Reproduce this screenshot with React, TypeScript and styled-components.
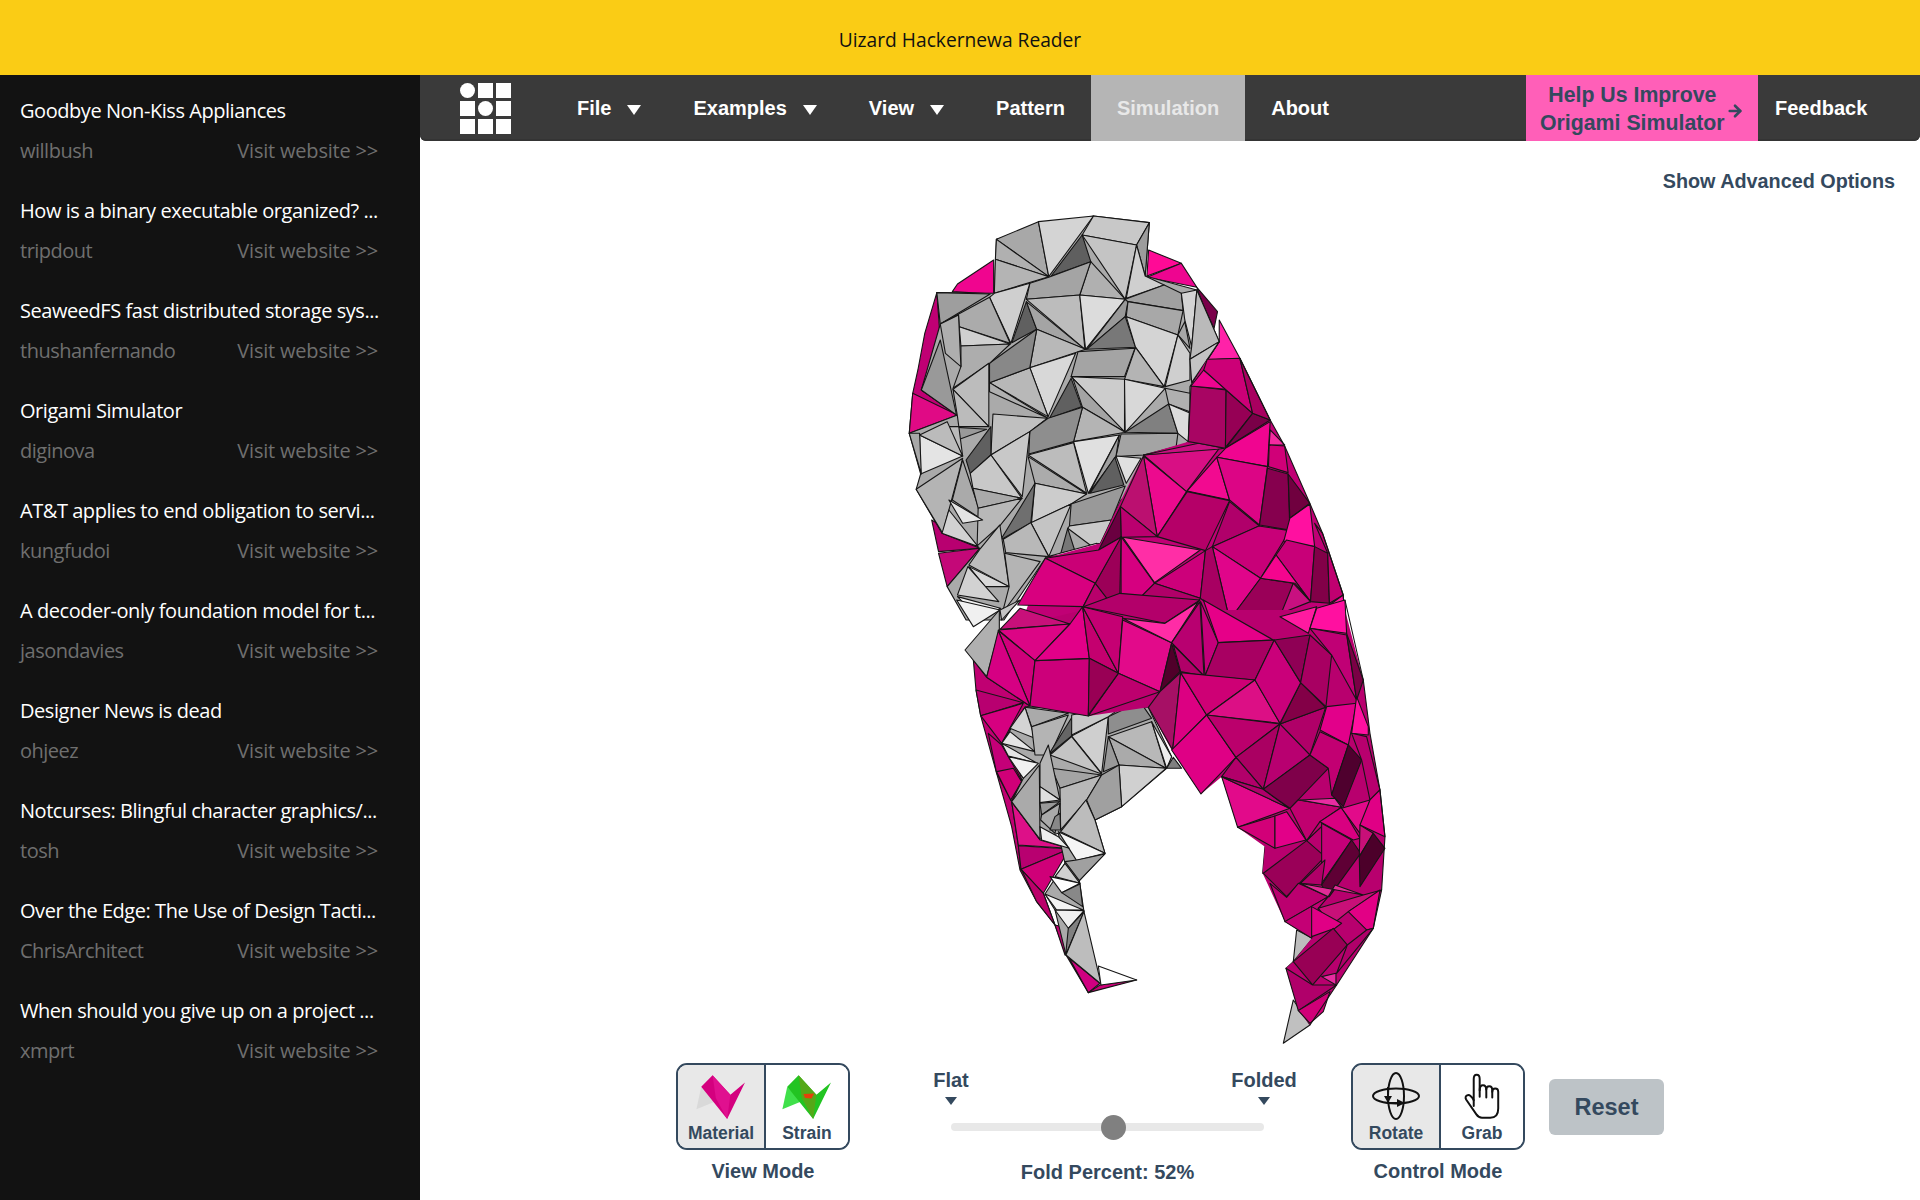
import { ArrowRight } from "lucide-react";
import styled, { createGlobalStyle } from "styled-components";

type Face = [string, string, boolean?];

const stories = [
  ["Goodbye Non-Kiss Appliances", "willbush"],
  ["How is a binary executable organized? ...", "tripdout"],
  ["SeaweedFS fast distributed storage sys...", "thushanfernando"],
  ["Origami Simulator", "diginova"],
  ["AT&T applies to end obligation to servi...", "kungfudoi"],
  ["A decoder-only foundation model for t...", "jasondavies"],
  ["Designer News is dead", "ohjeez"],
  ["Notcurses: Blingful character graphics/...", "tosh"],
  ["Over the Edge: The Use of Design Tacti...", "ChrisArchitect"],
  ["When should you give up on a project ...", "xmprt"],
];

// upper part of the model, traced from a crop at x 880 y 200
const upperFaces: Face[] = [
  ["#f0058f", "330,180 225,252 210,275 330,282"],
  ["#c00074", "165,278 130,400 110,510 95,580 85,700 225,645 120,570 175,420"],
  ["#e00a85", "95,580 85,700 225,645"],
  ["#ff0a96", "780,150 875,190 775,228"],
  ["#ee0590", "875,190 920,262 775,232"],
  ["#7a004a", "920,262 980,335 970,385 940,320"],
  ["#ff22a8", "985,360 1045,475 950,480 985,425"],
  ["#b80070", "150,960 290,1045 170,1055"],
  ["#c40878", "170,1060 290,1045 195,1160"],
  ["#aaaaaa", "338,118 620,48 782,68 770,228 920,270 985,425 900,560 895,725 700,900 640,1030 480,1075 360,1260 250,1260 195,1160 290,1045 180,1000 105,868 118,822 85,700 225,645 120,570 175,372 165,278 332,280"],
  ["#a8a8a8", "338,118 460,65 490,230"],
  ["#b0b0b0", "338,118 490,230 335,178"],
  ["#b4b4b4", "335,178 490,230 332,280"],
  ["#d4d4d4", "460,65 620,48 490,230"],
  ["#c8c8c8", "620,48 782,68 745,135 587,105"],
  ["#5f5f5f", "587,105 612,185 497,228"],
  ["#c4c4c4", "587,105 745,135 712,298"],
  ["#9c9c9c", "782,68 770,228 745,135"],
  ["#cfcfcf", "745,135 770,228 825,255 715,295"],
  ["#b0b0b0", "612,185 580,285 712,298"],
  ["#a4a4a4", "490,232 612,185 580,285 425,298 435,250"],
  ["#cfcfcf", "332,280 435,250 380,430 318,292"],
  ["#9e9e9e", "165,278 320,282 175,372"],
  ["#ababab", "175,372 318,292 378,430 230,380 228,345"],
  ["#d0d0d0", "230,380 378,432 235,438"],
  ["#bcbcbc", "425,298 580,285 595,448"],
  ["#dcdcdc", "580,285 712,298 597,448"],
  ["#606060", "425,305 455,388 383,428"],
  ["#a4a4a4", "425,305 595,448 455,388"],
  ["#b8b8b8", "455,388 597,448 575,455 435,503"],
  ["#999999", "712,298 720,305 712,350 600,448"],
  ["#787878", "712,350 742,442 600,448"],
  ["#a0a0a0", "712,298 825,255 875,280 880,332 720,305"],
  ["#a8a8a8", "720,305 880,332 865,405 715,350"],
  ["#d4d4d4", "715,350 865,405 825,560 742,442"],
  ["#cfcfcf", "865,405 900,460 900,540 828,560"],
  ["#a8a8a8", "885,365 865,405 900,445"],
  ["#d4d4d4", "875,280 920,270 905,440 885,360"],
  ["#bababa", "920,270 985,425 900,478 905,440"],
  ["#c4c4c4", "900,478 985,425 905,548"],
  ["#b4b4b4", "742,442 825,560 710,538"],
  ["#a4a4a4", "575,455 740,445 710,530 555,530"],
  ["#d8d8d8", "435,503 568,460 488,650"],
  ["#b8b8b8", "318,548 435,503 488,650"],
  ["#888888", "455,388 435,503 318,548 318,490"],
  ["#adadad", "235,438 378,432 318,490 212,565 235,500"],
  ["#cccccc", "555,530 710,538 710,697"],
  ["#d8d8d8", "710,538 828,565 712,697"],
  ["#606060", "555,535 585,620 492,655"],
  ["#a4a4a4", "560,535 712,697 588,622"],
  ["#b4b4b4", "588,622 712,697 562,725"],
  ["#b0b0b0", "318,548 488,655 318,575"],
  ["#c0c0c0", "328,642 485,655 435,695 322,765"],
  ["#8e8e8e", "488,655 588,622 562,725 432,762 435,695"],
  ["#b0b0b0", "828,565 900,580 900,635 838,612"],
  ["#808080", "838,612 865,700 712,697"],
  ["#dcdcdc", "838,612 898,638 895,725 865,700"],
  ["#a4a4a4", "700,702 865,700 860,740 765,765 685,770"],
  ["#e0e0e0", "562,725 695,705 605,880"],
  ["#bcbcbc", "430,765 562,728 600,880"],
  ["#a0a0a0", "695,705 685,770 607,880"],
  ["#e0e0e0", "685,768 758,775 715,850"],
  ["#606060", "682,772 708,855 610,880"],
  ["#c8c8c8", "322,765 435,695 413,890"],
  ["#606060", "250,780 322,680 322,765 262,820"],
  ["#999999", "190,680 310,688 225,720"],
  ["#bcbcbc", "212,568 316,490 316,680"],
  ["#bbbbbb", "212,568 316,680 195,680 240,768 225,650"],
  ["#999999", "120,570 175,420 222,645"],
  ["#aeaeae", "175,372 228,345 235,500 190,460"],
  ["#e4e4e4", "115,705 240,768 118,822"],
  ["#a8a8a8", "85,700 115,700 120,822"],
  ["#bbbbbb", "115,705 195,665 240,768"],
  ["#b4b4b4", "105,868 240,775 182,1000"],
  ["#aaaaaa", "240,780 298,960 210,900"],
  ["#c8c8c8", "262,820 322,765 412,895 270,865"],
  ["#aaaaaa", "270,865 412,895 285,925"],
  ["#ababab", "430,770 600,882 450,850"],
  ["#cccccc", "450,850 600,882 555,912 440,968"],
  ["#6f6f6f", "350,1020 450,850 438,968"],
  ["#c4c4c4", "438,968 555,912 490,1070"],
  ["#b8b8b8", "358,1018 438,968 490,1070 365,1058"],
  ["#999999", "555,912 712,858 672,960 550,978"],
  ["#cacaca", "550,978 672,960 640,1030 610,1035 545,985"],
  ["#777777", "525,1060 545,985 565,1050"],
  ["#e8e8e8", "480,1072 630,1030 635,1052"],
  ["#b8b8b8", "285,925 412,895 350,975 282,1038"],
  ["#d2d2d2", "180,1000 200,930 285,1040"],
  ["#e4e4e4", "200,900 298,960 240,970"],
  ["#bcbcbc", "348,975 292,1045 258,1095 375,1160"],
  ["#d8d8d8", "258,1100 375,1160 305,1160"],
  ["#d2d2d2", "225,1185 255,1100 345,1205"],
  ["#f0f0f0", "225,1190 350,1225 290,1260"],
  ["#b4b4b4", "362,1060 465,1085 355,1240 375,1160"],
  ["#c00075", "765,765 895,725 903,558 950,478 1045,475 1133,660 1175,738 1248,910 1285,1000 1345,1185 1350,1300 400,1300 480,1075 640,1030 700,900", true],
  ["#d80f84", "765,765 985,745 890,875"],
  ["#c81080", "765,765 925,730 1000,745 980,748"],
  ["#ec0a8e", "765,768 890,875 805,1010"],
  ["#bb1070", "765,768 805,1010 698,920"],
  ["#a80563", "903,558 1005,570 1003,745 925,730 895,725"],
  ["#960055", "1005,570 1082,640 1003,742"],
  ["#7a0048", "1082,640 1133,660 1003,745"],
  ["#ee0590", "903,558 940,510 1005,568"],
  ["#cc0077", "950,478 1045,475 1082,640 1005,570 940,510"],
  ["#a8005f", "1045,475 1133,660 1082,640"],
  ["#f00590", "1003,745 1133,665 1125,800 978,772"],
  ["#f42aa0", "1133,690 1175,735 1130,735"],
  ["#f20a90", "978,772 1015,900 892,873"],
  ["#dc0585", "978,772 1125,800 1102,975 1015,900"],
  ["#d00078", "1130,735 1175,738 1185,818 1128,800"],
  ["#86004e", "1125,805 1185,822 1190,990 1102,975"],
  ["#70003f", "1185,822 1248,910 1190,955"],
  ["#b50068", "892,875 1015,902 945,1052 805,1010"],
  ["#b0006a", "1015,905 1102,978 965,1040"],
  ["#c80078", "965,1040 1100,978 1190,992 1105,1135"],
  ["#ff10a0", "1190,955 1248,912 1262,1040 1172,1025"],
  ["#c80078", "1180,1020 1262,1040 1250,1205 1150,1065"],
  ["#820048", "1262,1040 1300,1060 1305,1210 1250,1205"],
  ["#c00070", "1262,970 1285,1000 1345,1185 1305,1210 1300,1060"],
  ["#ff2ea6", "705,1012 930,1050 797,1148"],
  ["#bb006f", "698,920 805,1010 700,1012"],
  ["#6a0040", "698,920 700,1012 635,1050"],
  ["#d60080", "700,1010 797,1150 700,1250"],
  ["#9c0058", "700,1010 625,1150 695,1250"],
  ["#ca0076", "480,1075 635,1050 700,1012 625,1150"],
  ["#d8007f", "480,1075 625,1150 590,1220 400,1215"],
  ["#cc007a", "797,1150 945,1052 930,1195"],
  ["#e0058a", "965,1040 1105,1135 1015,1260"],
  ["#a80062", "945,1052 965,1040 1015,1260 930,1195"],
  ["#9a0058", "1105,1135 1200,1150 1165,1260 1015,1260"],
  ["#f5058e", "1150,1065 1250,1205 1205,1150 1105,1135"],
  ["#b00068", "797,1150 930,1195 890,1260 700,1250"],
  ["#b8006b", "625,1150 700,1250 590,1220"],
  ["#c81080", "1200,1150 1250,1205 1165,1240"],
  ["#ff10a0", "1305,1215 1345,1185 1350,1260 1170,1260"],
];

const upperEdge = "1045,475 1133,660 1175,738 1248,910 1285,1000 1345,1185 1350,1260";

// lower part of the model, traced from a crop at x 940 y 600
const lowerFaces: Face[] = [
  ["#c00072", "100,180 140,232 270,318 255,322 210,390 245,540 215,605 235,737 243,808 310,880 345,975 378,1065 445,1178 388,1075 345,975 290,905 240,810 215,680 170,520 122,347 108,270"],
  ["#b80070", "108,270 250,308 122,347"],
  ["#d60080", "122,347 250,310 185,430"],
  ["#c40078", "145,400 185,435 245,540 215,605 170,520"],
  ["#d00078", "170,515 220,505 245,545 212,600"],
  ["#dd1088", "215,605 300,720 385,745 235,735"],
  ["#b80070", "235,737 388,747 243,808"],
  ["#cf0078", "243,808 388,747 310,880"],
  ["#bb006a", "245,810 310,880 345,975 290,905"],
  ["#c00070", "345,975 385,985 375,1065"],
  ["#d00080", "388,1075 480,1150 445,1178"],
  ["#cc0078", "445,1178 590,1140 480,1155"],
  ["#aaaaaa", "255,322 625,322 695,470 680,505 545,620 465,660 495,760 418,842 432,935 378,1065 345,930 315,882 375,790 355,700 300,718 215,605 250,535 185,430"],
  ["#b0b0b0", "75,150 178,30 178,90 140,230"],
  ["#f0f0f0", "50,0 180,30 100,80"],
  ["#c4c4c4", "180,30 240,0 185,60"],
  ["#aaaaaa", "255,322 385,340 275,380"],
  ["#d4d4d4", "255,322 285,415 210,385"],
  ["#e4e4e4", "210,395 285,455 185,430"],
  ["#e4e4e4", "185,430 292,490 205,468"],
  ["#f0f0f0", "205,470 295,490 250,535"],
  ["#b4b4b4", "275,380 385,345 330,465 285,465"],
  ["#666666", "325,465 400,345 395,408"],
  ["#cfcfcf", "395,408 505,350 485,520"],
  ["#8e8e8e", "505,350 600,305 635,355 505,402"],
  ["#c8c8c8", "395,345 555,315 505,350 395,405"],
  ["#b8b8b8", "505,410 635,365 678,505"],
  ["#eeeeee", "635,365 695,470 680,505"],
  ["#aaaaaa", "505,410 678,505 537,495"],
  ["#d0d0d0", "537,495 678,505 545,620"],
  ["#999999", "490,515 505,410 537,495"],
  ["#c4c4c4", "395,410 485,522 330,465"],
  ["#a4a4a4", "335,505 485,525 360,565"],
  ["#b8b8b8", "360,565 485,525 440,600 362,690"],
  ["#a0a0a0", "485,525 537,495 545,620 465,660 440,600"],
  ["#b4b4b4", "300,490 325,435 360,600 300,560"],
  ["#aaaaaa", "215,605 298,495 300,718"],
  ["#e0e0e0", "300,560 360,600 300,608"],
  ["#999999", "300,610 360,605 305,645"],
  ["#aaaaaa", "305,645 360,610 345,700 302,660"],
  ["#888888", "345,650 360,640 362,690 330,690"],
  ["#bcbcbc", "438,600 362,695 495,760 465,660"],
  ["#f5f5f5", "355,695 495,760 410,782"],
  ["#eeeeee", "300,680 355,710 388,745 305,720"],
  ["#a0a0a0", "375,785 410,780 495,762 418,842"],
  ["#d0d0d0", "345,830 375,790 420,850"],
  ["#ffffff", "330,830 420,850 365,878"],
  ["#888888", "365,878 420,852 428,920"],
  ["#f4f4f4", "315,882 430,930 350,930"],
  ["#f0f0f0", "345,930 432,932 385,985"],
  ["#808080", "385,985 432,935 377,1065"],
  ["#bdbdbd", "378,1065 432,935 483,1152"],
  ["#ffffff", "475,1098 590,1140 483,1155"],
  ["#808080", "680,505 700,472 725,505"],
  ["#bdbdbd", "1070,990 1118,1015 1060,1085"],
  ["#c8c8c8", "1060,1085 1118,1155 1038,1105"],
  ["#c0c0c0", "1060,1200 1110,1275 1030,1330"],
  ["#aaaaaa", "975,740 1000,745 968,820"],
  ["#b8006e", "1215,30 1270,240 1290,400 1320,570 1335,710 1325,870 1300,985 1190,1155 1110,1275 1075,1232 1038,1105 1060,1085 1115,1015 1035,965 968,820 975,740 893,682 845,530 783,582 695,450 625,322 445,348 270,318 140,232 175,92 430,30", true],
  ["#c8107a", "180,88 240,25 390,72"],
  ["#dc0585", "175,90 390,72 285,182"],
  ["#cf007a", "175,92 285,182 270,318"],
  ["#d60083", "175,92 270,318 140,232"],
  ["#cc007a", "285,182 448,175 445,348 270,318"],
  ["#e20088", "390,72 428,20 448,175 285,182"],
  ["#c4006f", "428,20 535,220 448,175"],
  ["#c50073", "428,20 548,50 535,220"],
  ["#e20a8a", "548,60 695,128 660,275 535,220"],
  ["#bd006e", "535,220 660,275 445,348"],
  ["#990055", "448,175 535,220 445,345"],
  ["#b3006a", "430,20 540,-20 780,0 675,70"],
  ["#ff2ca6", "548,55 675,70 775,5 695,128"],
  ["#b80070", "695,128 780,5 792,228"],
  ["#50002a", "695,130 720,215 660,275"],
  ["#b00068", "700,135 792,228 722,215"],
  ["#c4007a", "782,5 835,128 795,228"],
  ["#e60088", "790,0 1000,120 835,128"],
  ["#a80062", "835,128 1003,120 945,240 795,228"],
  ["#a61065", "660,275 722,218 698,450 625,322"],
  ["#dc0082", "722,218 800,345 698,450"],
  ["#ce0075", "722,218 945,240 800,345"],
  ["#dc0f85", "945,240 1020,370 800,345"],
  ["#df0085", "800,345 888,472 783,582 695,450"],
  ["#bb006c", "888,472 1020,372 800,345"],
  ["#aa0062", "888,472 1020,372 970,568"],
  ["#b80070", "1020,372 1110,465 970,568"],
  ["#b2006a", "888,472 970,568 845,530"],
  ["#e20a8a", "845,530 1050,625 893,682"],
  ["#b0006a", "845,530 970,568 1048,625"],
  ["#7f004a", "970,568 1110,465 1165,505 1050,625"],
  ["#b00068", "1020,372 1157,322 1110,465"],
  ["#830047", "1020,372 1082,248 1157,322"],
  ["#ca007a", "945,240 1003,120 1082,248 1020,370"],
  ["#8f0055", "1003,120 1082,248 1110,105"],
  ["#a80062", "1110,105 1175,165 1158,320 1082,248"],
  ["#ff1aa0", "1020,50 1130,20 1105,100"],
  ["#ff10a0", "1130,25 1215,0 1220,100 1110,85"],
  ["#c00075", "1110,85 1220,105 1250,300 1175,165"],
  ["#7a0045", "1220,100 1270,240 1250,300"],
  ["#e2008a", "1140,390 1160,320 1250,310 1225,435"],
  ["#ff10a0", "1250,290 1285,380 1285,405 1235,400"],
  ["#c20072", "1110,465 1140,395 1225,435 1175,585 1165,505"],
  ["#4f002e", "1225,435 1265,480 1210,620 1175,585"],
  ["#b8006e", "1235,400 1280,410 1320,570 1290,600 1265,480"],
  ["#c0006f", "1050,625 1075,600 1205,622 1100,722"],
  ["#e82ca0", "1080,600 1185,595 1205,622"],
  ["#d20078", "893,682 1005,648 1005,745"],
  ["#e20088", "1005,648 1040,635 1098,720 1005,745"],
  ["#c0006f", "1100,722 1205,622 1140,665"],
  ["#d80080", "1140,665 1205,622 1260,715 1240,720"],
  ["#e20a8a", "1205,625 1290,600 1260,700"],
  ["#e00085", "1290,600 1320,570 1335,710 1260,675"],
  ["#9a0058", "970,820 1100,722 1155,770 1040,890"],
  ["#c40078", "1145,670 1235,720 1145,850"],
  ["#5f0035", "1235,720 1262,760 1168,890 1145,855"],
  ["#c81078", "1260,675 1300,700 1258,770"],
  ["#4c002a", "1258,770 1300,700 1335,745 1260,860"],
  ["#b00068", "1040,890 1155,780 1145,855 1080,850"],
  ["#bb006f", "990,850 1040,892 1075,850 1165,890 1035,965"],
  ["#e02c95", "1080,850 1165,890 1185,855 1270,885"],
  ["#c40075", "1035,965 1165,890 1135,925 1115,1015"],
  ["#c81078", "1135,925 1270,885 1325,870 1225,935 1175,975"],
  ["#e20085", "1225,935 1320,870 1300,985 1280,990"],
  ["#e00085", "1115,920 1205,970 1185,985 1115,1010"],
  ["#980055", "1060,1085 1180,985 1222,1035 1118,1155"],
  ["#b0006a", "1222,1035 1280,990 1300,985 1190,1120"],
  ["#b0006a", "1038,1105 1118,1155 1190,1155 1075,1232"],
  ["#e82ca0", "1145,1130 1188,1120 1188,1155"],
  ["#d00078", "1075,1232 1170,1175 1150,1235 1110,1270"],
];

const lowerEdge = "1215,0 1270,240 1290,400 1320,570 1335,710 1325,870 1300,985 1190,1155 1110,1275";

const GlobalStyle = createGlobalStyle`
  html, body {
    margin: 0;
    padding: 0;
    background: #fff;
  }
`;

const Page = styled.div`
  width: 1920px;
  height: 1200px;
  overflow: hidden;
  display: flex;
  flex-direction: column;
  font-family: "Liberation Sans", Arial, sans-serif;
`;

const TopBar = styled.header`
  height: 75px;
  background: #facc15;
  display: flex;
  align-items: center;
  justify-content: center;
  padding-top: 3px;
  box-sizing: border-box;
  font-family: "Open Sans", sans-serif;
  font-size: 19.2px;
  color: #111;
`;

const Body = styled.div`
  flex: 1;
  display: flex;
  min-height: 0;
`;

const Sidebar = styled.aside`
  width: 420px;
  background: #121212;
  padding: 16px 42px 0 20px;
  box-sizing: border-box;
  display: flex;
  flex-direction: column;
  font-family: "Open Sans", sans-serif;
`;

const Story = styled.div`
  height: 100px;
  flex: none;
  display: flex;
  flex-direction: column;
  gap: 15px;
  padding-top: 7px;
  box-sizing: border-box;
`;

const StoryTitle = styled.div`
  font-size: 20px;
  line-height: 25px;
  color: #fff;
  white-space: nowrap;
  letter-spacing: -0.45px;
`;

const StoryMeta = styled.div`
  display: flex;
  justify-content: space-between;
  font-size: 20px;
  line-height: 25px;
  color: #6f6f6f;
`;

const StoryUser = styled.span`
  letter-spacing: -0.5px;
`;

const StoryLink = styled.span`
  letter-spacing: -0.2px;
`;

const Main = styled.main`
  flex: 1;
  display: flex;
  flex-direction: column;
  min-width: 0;
`;

const Nav = styled.nav`
  height: 66px;
  flex: none;
  display: flex;
  align-items: stretch;
  padding-left: 40px;
  background: #3a3a3a;
  border-radius: 0 0 6px 6px;
  box-shadow: inset 0 -2px 0 #343434;
  color: #fff;
  font-size: 20px;
  font-weight: 700;
`;

const Logo = styled.div`
  width: 51px;
  height: 51px;
  margin: 8px 40px 0 0;
  display: grid;
  grid-template-columns: repeat(3, 15px);
  grid-template-rows: repeat(3, 15px);
  gap: 3px;
`;

const LogoCell = styled.span<{ $round?: boolean }>`
  background: #fff;
  border-radius: ${(p) => (p.$round ? "50%" : "0")};
`;

const NavItem = styled.div<{ $active?: boolean }>`
  display: flex;
  align-items: center;
  padding: 0 26px;
  background: ${(p) => (p.$active ? "#b5b5b5" : "transparent")};
  color: ${(p) => (p.$active ? "#e8e8e8" : "#fff")};
`;

const Caret = styled.span`
  width: 0;
  height: 0;
  margin: 3px 0 0 16px;
  border-left: 7px solid transparent;
  border-right: 7px solid transparent;
  border-top: 10px solid #fff;
`;

const HelpLink = styled.div`
  margin-left: auto;
  width: 232px;
  box-sizing: border-box;
  background: #ff5fb8;
  color: #34495e;
  display: flex;
  align-items: center;
  padding: 2px 0 0 14px;
  gap: 1px;
  font-size: 21.3px;
  line-height: 28px;
  text-align: center;
  white-space: nowrap;
`;

const HelpArrow = styled(ArrowRight)`
  margin-top: 3px;
  flex: none;
`;

const FeedbackLink = styled.div`
  width: 162px;
  box-sizing: border-box;
  padding-left: 17px;
  display: flex;
  align-items: center;
`;

const OptionsRow = styled.div`
  height: 64px;
  flex: none;
  display: flex;
  justify-content: flex-end;
  align-items: flex-start;
  padding: 30px 25px 0 0;
  box-sizing: border-box;
  color: #34495e;
  font-size: 19.8px;
  font-weight: 700;
  line-height: 20px;
`;

const ModelCanvas = styled.svg`
  display: block;
  flex: none;
  width: 1500px;
  height: 858px;
`;

const MeshFace = styled.polygon<{ $flat?: boolean }>`
  stroke: ${(p) => (p.$flat ? "none" : "#151515")};
  stroke-width: 1.1px;
  stroke-linejoin: round;
  vector-effect: non-scaling-stroke;
`;

const MeshEdge = styled.polyline`
  fill: none;
  stroke: #151515;
  stroke-width: 1.1px;
  vector-effect: non-scaling-stroke;
`;

const ControlBar = styled.div`
  flex: none;
  display: flex;
  align-items: flex-start;
  padding-left: 256px;
  color: #34495e;
  font-weight: 700;
`;

const ControlGroup = styled.div`
  display: flex;
  flex-direction: column;
  align-items: center;
`;

const Segmented = styled.div`
  display: flex;
  height: 87px;
  box-sizing: border-box;
  border: 2px solid #34495e;
  border-radius: 11px;
  overflow: hidden;
`;

const SegmentButton = styled.div<{ $active?: boolean; $wide?: boolean }>`
  width: ${(p) => (p.$wide ? 86 : 84)}px;
  box-sizing: border-box;
  display: flex;
  flex-direction: column;
  align-items: center;
  justify-content: flex-end;
  padding-bottom: 6px;
  background: ${(p) => (p.$active ? "#e8e8e8" : "#fff")};
  font-size: 17.5px;
  line-height: 17px;
  & + & {
    border-left: 2px solid #34495e;
  }
  svg {
    margin-bottom: 5px;
    display: block;
  }
`;

const Caption = styled.div`
  margin-top: 10px;
  font-size: 20px;
  line-height: 22px;
  white-space: nowrap;
`;

const SliderGroup = styled.div`
  width: 373px;
  margin: 0 57px 0 71px;
  display: flex;
  flex-direction: column;
  align-items: center;
`;

const SliderLabels = styled.div`
  width: 100%;
  display: flex;
  justify-content: space-between;
  height: 60px;
  padding-top: 6px;
  box-sizing: border-box;
  font-size: 20px;
  line-height: 22px;
`;

const SliderLabel = styled.div`
  width: 60px;
  display: flex;
  flex-direction: column;
  align-items: center;
  &::after {
    content: "";
    margin-top: 6px;
    border-left: 6.5px solid transparent;
    border-right: 6.5px solid transparent;
    border-top: 8px solid #34495e;
  }
`;

const SliderTrack = styled.div`
  position: relative;
  width: 313px;
  height: 8px;
  border-radius: 4px;
  background: #e8e8e8;
  margin-bottom: 20px;
`;

const SliderThumb = styled.div`
  position: absolute;
  top: -8.5px;
  width: 25px;
  height: 25px;
  border-radius: 50%;
  background: #808080;
`;

const ResetButton = styled.div`
  width: 115px;
  height: 56px;
  margin: 16px 0 0 24px;
  border-radius: 6px;
  background: #bdc3c7;
  display: flex;
  align-items: center;
  justify-content: center;
  font-size: 23.5px;
`;

function Thumbnail({ strain }: { strain?: boolean }) {
  const main = strain ? "#22c422" : "#d4007f";
  const wing = strain ? "#3fe04a" : "#d9d9d9";
  return (
    <svg width="54" height="46" viewBox="98 66 156 142">
      <polygon points="115,105 100,175 160,150" fill={wing} />
      <polygon points="115,105 150,70 205,130 250,92 195,205" fill={main} />
      <polygon points="150,70 205,130 195,205 160,140" fill={strain ? "#55a818" : "#e0108f"} />
      {strain && <polygon points="165,128 198,126 190,142 170,140" fill="#e5400a" />}
    </svg>
  );
}

function RotateIcon() {
  return (
    <svg width="50" height="48" viewBox="0 0 50 48" fill="none" stroke="#111">
      <ellipse cx="25" cy="24" rx="23" ry="7.5" strokeWidth="2" />
      <ellipse cx="25" cy="24" rx="8" ry="23" strokeWidth="2" />
      <path d="M17 15v10M17 31h9" strokeWidth="2" />
      <path d="M13 24h8l-4 7zM26 27l8 4-8 4z" fill="#111" stroke="none" />
    </svg>
  );
}

function HandIcon() {
  return (
    <svg width="40" height="48" viewBox="785 65 120 145" fill="none" stroke="#111" strokeWidth="6" strokeLinecap="round" strokeLinejoin="round">
      <path d="M820 168V86Q820 73 829 73Q838 73 838 86V140" />
      <path d="M838 120Q838 105 848 105Q858 105 858 120V142" />
      <path d="M858 118Q858 108 867 108Q876 108 876 120V142" />
      <path d="M876 125Q876 115 885 115Q894 115 894 125V175Q894 203 870 203H845Q835 203 828 193L797 148Q792 138 802 135Q810 133 820 150" />
    </svg>
  );
}

export default function App() {
  const foldPercent = 52;
  // the thumb stops short of the track ends by its own radius
  const thumbLeft = ((313 - 25) * foldPercent) / 100;

  return (
    <Page>
      <GlobalStyle />
      <TopBar>Uizard Hackernewa Reader</TopBar>
      <Body>
        <Sidebar>
          {stories.map(([title, user]) => (
            <Story key={title}>
              <StoryTitle>{title}</StoryTitle>
              <StoryMeta>
                <StoryUser>{user}</StoryUser>
                <StoryLink>Visit website &gt;&gt;</StoryLink>
              </StoryMeta>
            </Story>
          ))}
        </Sidebar>
        <Main>
          <Nav>
            <Logo>
              {[true, false, false, false, true, false, false, false, false].map((round, i) => (
                <LogoCell key={i} $round={round} />
              ))}
            </Logo>
            <NavItem>
              File
              <Caret />
            </NavItem>
            <NavItem>
              Examples
              <Caret />
            </NavItem>
            <NavItem>
              View
              <Caret />
            </NavItem>
            <NavItem>Pattern</NavItem>
            <NavItem $active>Simulation</NavItem>
            <NavItem>About</NavItem>
            <HelpLink>
              <span>
                Help Us Improve
                <br />
                Origami Simulator
              </span>
              <HelpArrow size={18} strokeWidth={3.5} />
            </HelpLink>
            <FeedbackLink>Feedback</FeedbackLink>
          </Nav>
          <OptionsRow>Show Advanced Options</OptionsRow>
          <ModelCanvas viewBox="420 205 1500 858">
            <g transform="translate(880 200) scale(0.3444 0.3333)">
              {upperFaces.map(([fill, points, flat], i) => (
                <MeshFace key={i} fill={fill} points={points} $flat={flat} />
              ))}
              <MeshEdge points={upperEdge} />
            </g>
            <g transform="translate(940 600) scale(0.3333)">
              {lowerFaces.map(([fill, points, flat], i) => (
                <MeshFace key={i} fill={fill} points={points} $flat={flat} />
              ))}
              <MeshEdge points={lowerEdge} />
            </g>
          </ModelCanvas>
          <ControlBar>
            <ControlGroup>
              <Segmented>
                <SegmentButton $active $wide>
                  <Thumbnail />
                  Material
                </SegmentButton>
                <SegmentButton>
                  <Thumbnail strain />
                  Strain
                </SegmentButton>
              </Segmented>
              <Caption>View Mode</Caption>
            </ControlGroup>
            <SliderGroup>
              <SliderLabels>
                <SliderLabel>Flat</SliderLabel>
                <SliderLabel>Folded</SliderLabel>
              </SliderLabels>
              <SliderTrack>
                <SliderThumb style={{ left: `${thumbLeft}px` }} />
              </SliderTrack>
              <Caption>Fold Percent: {foldPercent}%</Caption>
            </SliderGroup>
            <ControlGroup>
              <Segmented>
                <SegmentButton $active $wide>
                  <RotateIcon />
                  Rotate
                </SegmentButton>
                <SegmentButton>
                  <HandIcon />
                  Grab
                </SegmentButton>
              </Segmented>
              <Caption>Control Mode</Caption>
            </ControlGroup>
            <ResetButton>Reset</ResetButton>
          </ControlBar>
        </Main>
      </Body>
    </Page>
  );
}
